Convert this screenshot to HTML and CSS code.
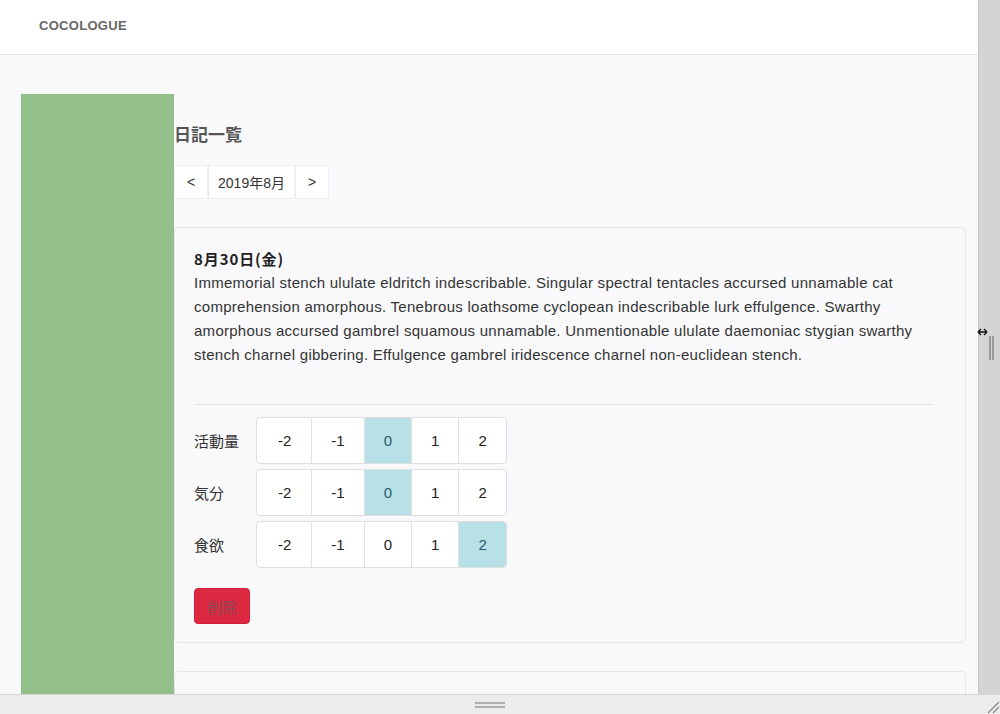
FILE: index.html
```html
<!DOCTYPE html>
<html lang="ja">
<head>
<meta charset="utf-8">
<title>COCOLOGUE</title>
<link rel="stylesheet" href="styles.css">
</head>
<body>
<div class="frame">
  <div class="viewport">
    <header class="topbar">
      <div class="brand">COCOLOGUE</div>
    </header>
    <main class="main">
      <aside class="sidebar"></aside>
      <section class="content">
        <h1 class="title">日記一覧</h1>
        <nav class="pager">
          <button class="pg-btn pg-arrow">&lt;</button>
          <button class="pg-btn pg-month">2019年8月</button>
          <button class="pg-btn pg-arrow">&gt;</button>
        </nav>
        <article class="card">
          <div class="date">8月30日(金)</div>
          <p class="body">Immemorial stench ululate eldritch indescribable. Singular spectral tentacles accursed unnamable cat comprehension amorphous. Tenebrous loathsome cyclopean indescribable lurk effulgence. Swarthy amorphous accursed gambrel squamous unnamable. Unmentionable ululate daemoniac stygian swarthy stench charnel gibbering. Effulgence gambrel iridescence charnel non-euclidean stench.</p>
          <hr class="sep">
          <div class="rows">
            <div class="row">
              <span class="label">活動量</span>
              <div class="group">
                <span class="opt">-2</span><span class="opt">-1</span><span class="opt active">0</span><span class="opt">1</span><span class="opt">2</span>
              </div>
            </div>
            <div class="row">
              <span class="label">気分</span>
              <div class="group">
                <span class="opt">-2</span><span class="opt">-1</span><span class="opt active">0</span><span class="opt">1</span><span class="opt">2</span>
              </div>
            </div>
            <div class="row">
              <span class="label">食欲</span>
              <div class="group">
                <span class="opt">-2</span><span class="opt">-1</span><span class="opt">0</span><span class="opt">1</span><span class="opt active">2</span>
              </div>
            </div>
          </div>
          <button class="delete">削除</button>
        </article>
        <article class="card card-next"></article>
      </section>
    </main>
  </div>
  <div class="vbar">
    <svg class="grip" width="22" height="40" viewBox="0 0 22 40">
      <path d="M-1 2 H8 M-1 2 L2 -1 M-1 2 L2 5 M8 2 L5 -1 M8 2 L5 5" stroke="#111" stroke-width="1.4" fill="none"/>
      <path d="M11 6 V30 M14 6 V30" stroke="#888" stroke-width="1.5"/>
    </svg>
  </div>
  <div class="hbar">
    <svg class="hgrip" width="32" height="8" viewBox="0 0 32 8"><path d="M1 2 H31 M1 6 H31" stroke="#999" stroke-width="1.6"/></svg>
    <svg class="corner" width="16" height="16" viewBox="0 0 16 16"><path d="M4 15 L15 4 M9 15 L15 9" stroke="#888" stroke-width="1.3"/></svg>
  </div>
</div>
</body>
</html>
```

FILE: styles.css
```css
* { box-sizing: border-box; }
html, body { margin: 0; padding: 0; }
body {
  width: 1000px;
  height: 714px;
  overflow: hidden;
  font-family: "Liberation Sans", "Noto Sans CJK JP", Arial, sans-serif;
  color: #333;
}
.frame {
  display: grid;
  grid-template-columns: 978px 22px;
  grid-template-rows: 694px 20px;
  width: 1000px;
  height: 714px;
}
.viewport {
  background: #f9f9fb;
  overflow: hidden;
  display: flex;
  flex-direction: column;
}
.topbar {
  height: 55px;
  flex: none;
  background: #fff;
  border-bottom: 1px solid #e6e6e8;
  display: flex;
  align-items: center;
  padding-left: 39px;
  padding-bottom: 3px;
}
.brand {
  font-weight: bold;
  font-size: 13px;
  color: #666;
  letter-spacing: 0.3px;
}
.main {
  flex: 1;
  display: flex;
  padding: 39px 12px 0 21px;
  min-height: 0;
}
.sidebar {
  width: 153px;
  flex: none;
  background: #93bf8b;
}
.content {
  flex: 1;
  min-width: 0;
}
.title {
  margin: 0;
  padding-top: 28px;
  font-size: 17px;
  line-height: 24px;
  font-weight: bold;
  color: #555;
  font-family: "Noto Sans CJK JP", sans-serif;
}
.pager {
  display: flex;
  margin-top: 19px;
  height: 34px;
}
.pg-btn {
  font-family: "Liberation Sans", "Noto Sans CJK JP", sans-serif;
  font-size: 14px;
  color: #333;
  background: #fff;
  border: 1px solid #f0f0f2;
  margin: 0;
  padding: 0;
  height: 34px;
}
.pg-arrow { width: 34px; }
.pg-month { width: 87px; border-left: 1px solid #ececee; border-right: 1px solid #ececee; }
.card {
  margin-top: 28px;
  background: #f9f9fb;
  border: 1px solid #e6e6e8;
  border-radius: 5px;
  padding: 19px 31px 18px 19px;
}
.date {
  font-weight: bold;
  font-size: 15px;
  line-height: 24px;
  color: #222;
  font-family: "Noto Sans CJK JP", sans-serif;
  letter-spacing: 0.9px;
}
.body {
  margin: 0;
  font-size: 15px;
  line-height: 24px;
  color: #333;
  letter-spacing: 0.27px;
}
.sep {
  margin: 37px 0 12px;
  border: 0;
  border-top: 1px solid #e6e6e8;
}
.rows {
  display: flex;
  flex-direction: column;
  gap: 5px;
}
.row {
  display: flex;
  align-items: center;
}
.label {
  width: 62px;
  font-size: 15px;
  color: #333;
  font-family: "Noto Sans CJK JP", sans-serif;
}
.group {
  display: flex;
  height: 47px;
  border: 1px solid #dedee0;
  border-radius: 4px;
  background: #fff;
  overflow: hidden;
}
.opt {
  display: flex;
  align-items: center;
  justify-content: center;
  font-size: 15px;
  color: #222;
  padding: 0 19px;
  border-left: 1px solid #e2e2e4;
}
.opt:first-child { border-left: 0; padding: 0 20px 0 21px; }
.opt.active {
  background: #b7e0e7;
  color: #2c5b6a;
}
.delete {
  margin-top: 20px;
  display: block;
  width: 56px;
  height: 36px;
  background: #dc2840;
  border: 1px solid #d0223a;
  border-radius: 4px;
  color: #8a4a55;
  font-size: 15px;
  font-family: "Noto Sans CJK JP", sans-serif;
  padding: 0;
}
.card-next {
  margin-top: 28px;
  height: 60px;
  padding: 0;
}
.vbar {
  background: #d4d4d4;
  border-left: 1px solid #c8c8c8;
  position: relative;
}
.grip {
  position: absolute;
  left: 0;
  top: 330px;
  overflow: visible;
}
.hbar {
  grid-column: 1 / span 2;
  background: #ececec;
  border-top: 1px solid #d6d6d6;
  position: relative;
  display: flex;
  align-items: center;
  justify-content: center;
}
.hgrip { margin-left: -20px; }
.corner {
  position: absolute;
  right: 0;
  bottom: 0;
}
```
